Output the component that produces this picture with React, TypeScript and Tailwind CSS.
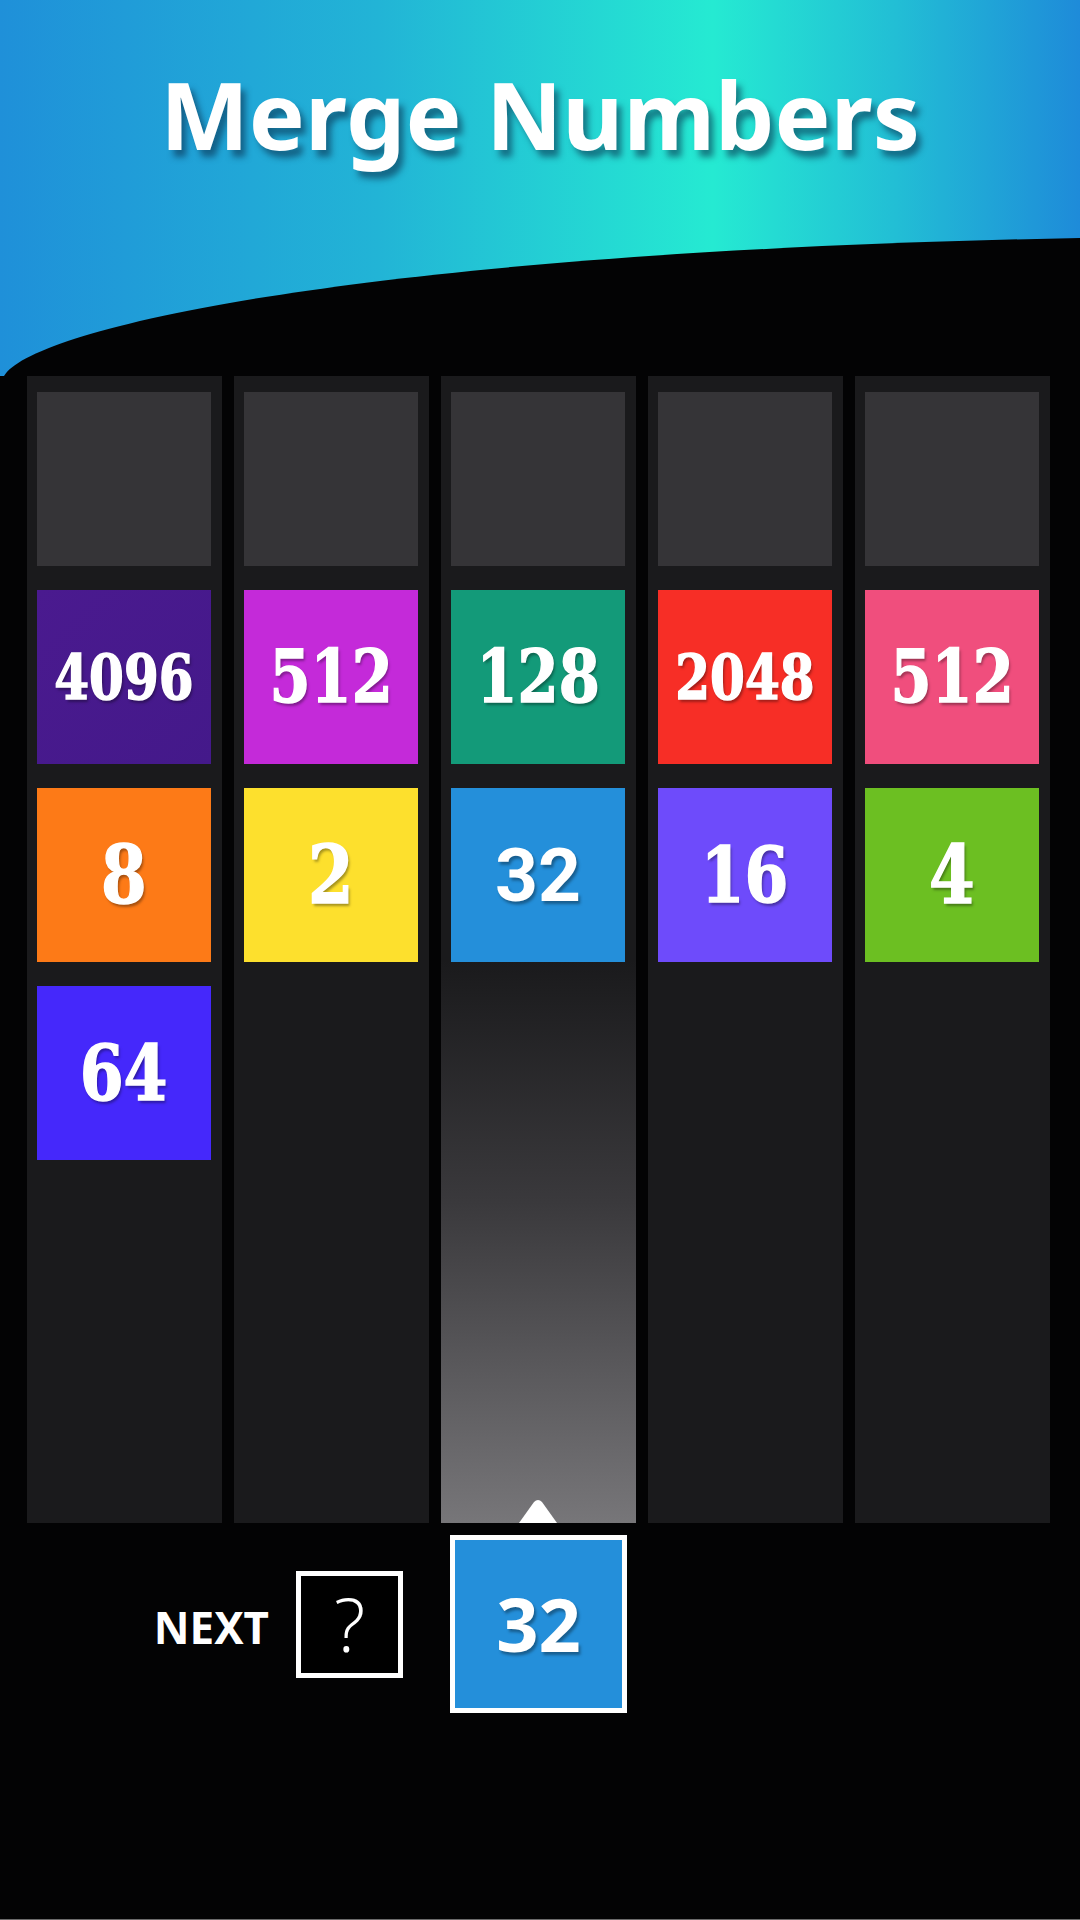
import React from 'react';

type Tile = { value: number; bg: string };

// board columns, top to bottom (the first slot of each column stays empty)
const columns: Tile[][] = [
    [{ value: 4096, bg: 'bg-[linear-gradient(135deg,#4a1a8f,#44198a)]' }, { value: 8, bg: 'bg-[#fd7a17]' }, { value: 64, bg: 'bg-[#4528fb]' }],
    [{ value: 512, bg: 'bg-[#c42ad9]' }, { value: 2, bg: 'bg-[#fde02d]' }],
    [{ value: 128, bg: 'bg-[#139a79]' }, { value: 32, bg: 'bg-[#248fda]' }],
    [{ value: 2048, bg: 'bg-[#f72e26]' }, { value: 16, bg: 'bg-[#6e4bfb]' }],
    [{ value: 512, bg: 'bg-[#f04e7d]' }, { value: 4, bg: 'bg-[#6cbf22]' }],
];

const slabSize: Record<number, string> = {
    1: 'text-[80px]', 2: 'text-[77px]', 3: 'text-[72px]', 4: 'text-[61px]',
};

const ACTIVE = 2;

function TileLabel({ value }: { value: number }) {
    // 32 is drawn in the sans face, the rest in slab serif
    if (value === 32) {
        return (
            <span className="font-['Roboto',sans-serif] text-[75px] font-bold leading-none text-white [text-shadow:2px_3px_3px_rgba(0,0,0,0.35)]">
                {value}
            </span>
        );
    }
    const digits = String(value).length;
    return (
        <span className={`${slabSize[digits]} inline-block scale-x-[0.82] font-['DejaVu_Serif',serif] font-bold leading-none text-white [-webkit-text-stroke:1.5px_white] [text-shadow:2px_3px_3px_rgba(0,0,0,0.35)]`}>
            {value}
        </span>
    );
}

function Column({ tiles, active }: { tiles: Tile[]; active: boolean }) {
    return (
        <div className={`relative flex h-[1147px] w-[195px] flex-col gap-[24px] pl-[10px] pt-[16px] ${active
            ? 'bg-[linear-gradient(to_bottom,#1a1a1c_0%,#1a1a1c_51%,#3a393c_72%,#777679_100%)]'
            : 'bg-[#1a1a1c]'}`}>
            <div className="h-[174px] w-[174px] bg-[#353437]" />
            {tiles.map((t, i) => (
                <div key={i} className={`flex h-[174px] w-[174px] items-center justify-center ${t.bg}`}>
                    <TileLabel value={t.value} />
                </div>
            ))}
            {active && (
                <svg className="absolute bottom-0 left-[78px]" width="38" height="24" viewBox="0 0 38 24">
                    <path d="M0 24 L15 3 Q19 -1 23 3 L38 24 Z" fill="#fff" />
                </svg>
            )}
        </div>
    );
}

export default function App() {
    return (
        <div className="flex h-[1920px] w-[1080px] flex-col overflow-hidden bg-[#030304] font-['Noto_Sans',sans-serif]">
            {/* header */}
            <div className="relative h-[376px] bg-[linear-gradient(to_right,#1f90d9_0%,#22b4d6_35%,#25ead2_66%,#22bed5_83%,#1e8bd9_100%)]">
                <svg className="absolute inset-0" width="1080" height="376" viewBox="0 0 1080 376" preserveAspectRatio="none">
                    <path d="M4 376 C30 330 350 252 1080 238 L1080 376 Z" fill="#030304" />
                </svg>
                <h1 className="relative pt-[67px] text-center text-[94px] font-bold leading-[94px] text-white [text-shadow:5px_7px_6px_rgba(8,40,70,0.55)]">
                    Merge Numbers
                </h1>
            </div>

            {/* board */}
            <div className="flex gap-[12px] pl-[27px]">
                {columns.map((tiles, i) => (
                    <Column key={i} tiles={tiles} active={i === ACTIVE} />
                ))}
            </div>

            {/* next / current */}
            <div className="mt-[12px] flex items-center pl-[139px]">
                <div className="w-[130px] pt-[6px] text-right text-[44px] font-bold leading-none text-white">NEXT</div>
                <div className="ml-[27px] flex h-[107px] w-[107px] items-center justify-center border-[5px] border-white bg-black">
                    <span className="font-['Open_Sans',sans-serif] text-[74px] font-light leading-none text-white">?</span>
                </div>
                <div className="ml-[47px] flex h-[178px] w-[177px] items-center justify-center border-[5px] border-white bg-[#248fda]">
                    <span className="font-['Open_Sans',sans-serif] text-[74px] font-bold leading-none text-white [text-shadow:2px_3px_3px_rgba(0,0,0,0.35)]">32</span>
                </div>
            </div>

            <div className="mt-auto h-px bg-[#6a6a6a]" />
        </div>
    );
}
